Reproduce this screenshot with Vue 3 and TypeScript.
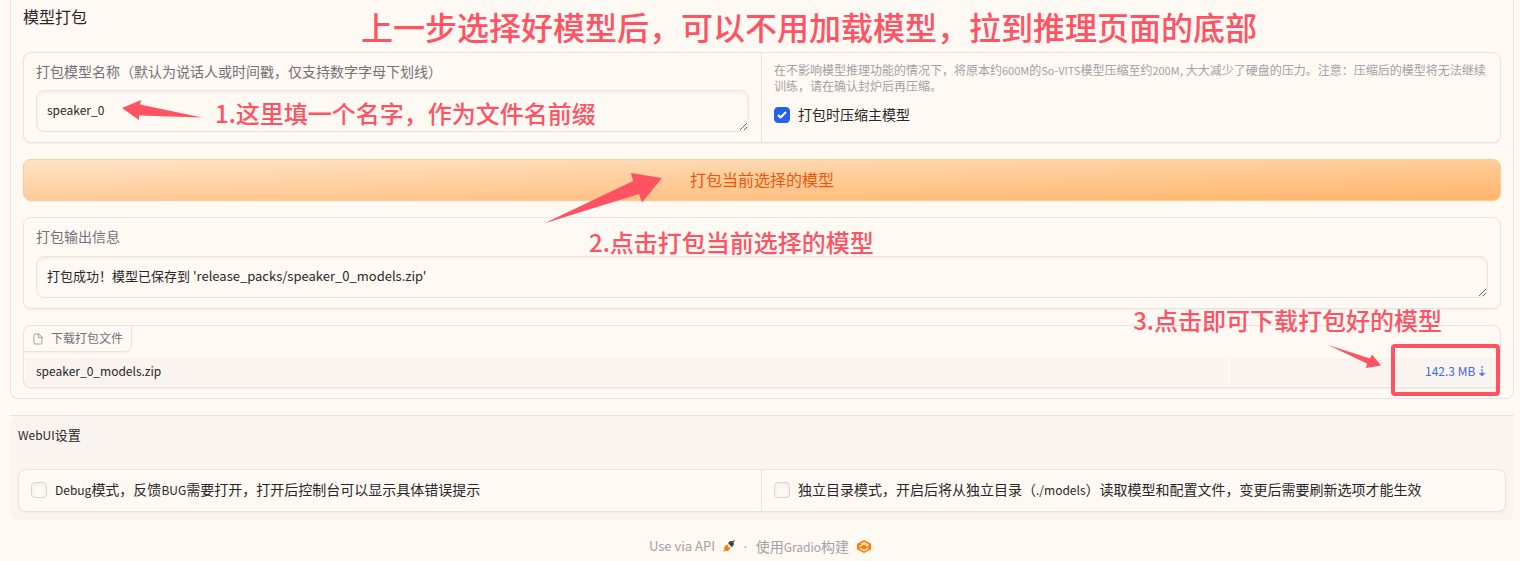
<script setup lang="ts">
import { ref } from 'vue'

const speaker = ref('speaker_0')
const output = ref("打包成功！模型已保存到 'release_packs/speaker_0_models.zip'")
const compress = ref(true)
const debug = ref(false)
const standalone = ref(false)
const files = [{ name: 'speaker_0_models.zip', size: '142.3 MB' }]
</script>

<template>
  <div class="page">
    <main class="panel">
      <h2 class="heading">模型打包</h2>

      <section class="card split">
        <div class="cell">
          <label class="label" for="speaker">打包模型名称（默认为说话人或时间戳，仅支持数字字母下划线）</label>
          <textarea id="speaker" v-model="speaker" class="field" rows="1"></textarea>
        </div>
        <div class="cell">
          <p class="info">在不影响模型推理功能的情况下，将原本约<span class="latin">600M</span>的<span class="latin">So-VITS</span>模型压缩至约<span class="latin">200M</span>, 大大减少了硬盘的压力。注意：压缩后的模型将无法继续训练，请在确认封炉后再压缩。</p>
          <label class="check"><input v-model="compress" type="checkbox" /><span class="check-text">打包时压缩主模型</span></label>
        </div>
      </section>

      <button class="primary" type="button">打包当前选择的模型</button>

      <section class="card cell output">
        <label class="label" for="output">打包输出信息</label>
        <textarea id="output" v-model="output" class="field" rows="1" readonly></textarea>
      </section>

      <section class="card files">
        <div class="file-label">
          <svg viewBox="0 0 24 24" width="12" height="12" fill="none" stroke="currentColor" stroke-width="2" stroke-linecap="round" stroke-linejoin="round" aria-hidden="true">
            <path d="M13 2H6a2 2 0 0 0-2 2v16a2 2 0 0 0 2 2h12a2 2 0 0 0 2-2V9z" />
            <path d="M13 2v7h7" />
          </svg>
          <span>下载打包文件</span>
        </div>
        <table class="file-table">
          <tbody>
            <tr v-for="file in files" :key="file.name">
              <td>{{ file.name }}</td>
              <td class="download"><a href="#">{{ file.size }}<span class="down">⇣</span></a></td>
            </tr>
          </tbody>
        </table>
      </section>
    </main>

    <section class="settings">
      <div class="settings-body">
        <h3 class="settings-title"><span class="latin">WebUI</span>设置</h3>
        <div class="card split">
          <div class="cell">
            <label class="check"><input v-model="debug" type="checkbox" /><span class="check-text"><span class="latin">Debug</span>模式，反馈<span class="latin">BUG</span>需要打开，打开后控制台可以显示具体错误提示</span></label>
          </div>
          <div class="cell">
            <label class="check"><input v-model="standalone" type="checkbox" /><span class="check-text">独立目录模式，开启后将从独立目录（<span class="latin">./models</span>）读取模型和配置文件，变更后需要刷新选项才能生效</span></label>
          </div>
        </div>
      </div>
    </section>

    <footer class="footer">
      <a class="api" href="#">Use via API
        <svg viewBox="0 0 28 28" width="12" height="12" aria-hidden="true">
          <path fill="#3c4555" d="M26.900 2.900a1.300 1.300 0 0 0-1.900-1.900l-2.400 2.500c-1.500-.9-3-1.100-4.400-.9-1.700.3-3.100 1.100-3.800 1.800l-2 2a1.300 1.300 0 0 0 0 1.900l7.300 7.300a1.300 1.300 0 0 0 1.900 0l2-2c.7-.7 1.500-2.100 1.800-3.800.2-1.400 0-2.900-.9-4.400z" />
          <path fill="#ff7c00" d="M12.300 12.900a1.300 1.300 0 0 0-1.900-1.900l-1.700 1.800-.3-.4a1.300 1.300 0 0 0-1.900 0l-2 2c-.7.700-1.500 2.100-1.800 3.800-.2 1.400 0 2.900.9 4.400L1.100 25.100A1.300 1.300 0 0 0 3 27l2.500-2.500c1.500.9 3 1.100 4.400.9 1.700-.3 3.100-1.100 3.800-1.800l2-2a1.300 1.300 0 0 0 0-1.900l-.4-.4 1.800-1.700a1.300 1.300 0 0 0-1.900-1.900l-1.800 1.700-2.700-2.700z" />
        </svg>
      </a>
      <span class="dot">·</span>
      <a href="#"><span>使用<span class="latin">Gradio</span>构建</span>
        <svg viewBox="0 0 28 26" width="14" height="13" aria-hidden="true">
          <path fill="#ff7c00" fill-rule="evenodd" d="M14 0 28 7.500v11L14 26 0 18.500v-11zM14 4 6.500 8 9 9.500l5-2.500 8 4 1.500-1L22 8zM4 12v2.500l10-5 8 4.500 2-1-10-5.500zM4.500 17.500l9.500 5 9.500-5-2.500-1.500-7 3.500-7-3.500z" />
        </svg>
      </a>
    </footer>

    <p class="note note-title">上一步选择好模型后，可以不用加载模型，拉到推理页面的底部</p>
    <p class="note note-name">1.这里填一个名字，作为文件名前缀</p>
    <p class="note note-pack">2.点击打包当前选择的模型</p>
    <p class="note note-download">3.点击即可下载打包好的模型</p>
    <svg class="arrow arrow-name" width="80" height="20" viewBox="0 0 80 20" aria-hidden="true"><path d="M0 8 19 0 18 4.500 80 17.500 17 15.500 17 20Z" /></svg>
    <svg class="arrow arrow-pack" width="118" height="51" viewBox="0 0 118 51" aria-hidden="true"><path d="M0 50.500 89 8 87 0 118 5 98 29.500 95 21Z" /></svg>
    <svg class="arrow arrow-download" width="53" height="24" viewBox="0 0 53 24" aria-hidden="true"><path d="M0 0 42 13.500 44 9.500 53 20.500 38 23 39 18.500Z" /></svg>
    <div class="frame"></div>
  </div>
</template>

<style>
body {
  background: #fff9f3;
}
</style>

<style scoped>
.page {
  position: relative;
  padding: 0 6px 0 10px;
  overflow: hidden;
  background: #fff9f3;
  color: #27272a;
  font-family: "Noto Sans CJK SC", sans-serif;
  font-size: 14px;
  line-height: 20px;
}
* {
  box-sizing: border-box;
}
.latin {
  display: inline-block;
  font-size: 12px;
  line-height: 12px;
}
.panel {
  display: flex;
  flex-direction: column;
  gap: 16px;
  padding: 0 12px 10px;
  border: 1px solid #e4e4e7;
  border-top: 0;
  border-radius: 0 0 8px 8px;
}
.heading {
  margin: 0;
  padding: 4px 0 8px;
  font-size: 16px;
  font-weight: 400;
  line-height: 24px;
}
.card {
  border: 1px solid #e4e4e7;
  border-radius: 8px;
  background: #fff9f3;
  box-shadow: 0 1px 2px rgba(0, 0, 0, 0.05);
}
.split {
  display: grid;
  grid-template-columns: 1fr 1fr;
}
.cell {
  padding: 8px 12px 10px;
}
.split > .cell:first-child {
  border-right: 1px solid #e4e4e7;
}
.label {
  display: block;
  margin-bottom: 9px;
  color: #71717a;
}
.output .label {
  margin-bottom: 10px;
}
.field {
  display: block;
  width: 100%;
  height: 42px;
  padding: 9px 10px 11px;
  border: 1px solid #e4e4e7;
  border-radius: 8px;
  outline: 0;
  background: #fff9f3;
  box-shadow: inset 0 2px 4px rgba(0, 0, 0, 0.05);
  color: inherit;
  font: inherit;
  font-size: 12px;
  line-height: 20px;
  overflow: hidden;
  resize: vertical;
}
#output {
  font-size: 13px;
}
.info {
  margin: 1px 0 10px;
  color: #a1a1aa;
  font-size: 12px;
  line-height: 16px;
}
.info .latin {
  font-size: 11px;
}
.check {
  display: flex;
  align-items: center;
  gap: 8px;
}
.check-text {
  padding-bottom: 2px;
}
.check input {
  flex: none;
  appearance: none;
  width: 16px;
  height: 16px;
  margin: 0;
  border: 1px solid #d4d4d8;
  border-radius: 4px;
  background: #fff9f3;
  box-shadow: inset 0 2px 4px rgba(0, 0, 0, 0.05);
}
.check input:checked {
  border-color: #2563eb;
  background: #2563eb url("data:image/svg+xml,%3Csvg viewBox='0 0 16 16' fill='white' xmlns='http://www.w3.org/2000/svg'%3E%3Cpath d='M12.2 4.800a1 1 0 0 1 0 1.400l-5 5a1 1 0 0 1-1.400 0l-2-2a1 1 0 0 1 1.400-1.400L6.500 9.100l4.300-4.300a1 1 0 0 1 1.400 0z'/%3E%3C/svg%3E") center / 16px;
}
.primary {
  height: 42px;
  padding: 0 0 2px;
  border: 1px solid #fdcb96;
  border-radius: 8px;
  background: linear-gradient(to bottom right, #ffe3c6, #ffb56b);
  box-shadow: 0 1px 2px rgba(0, 0, 0, 0.05);
  color: #ea580c;
  font: inherit;
  font-size: 16px;
  line-height: 24px;
}
.files {
  overflow: hidden;
}
.file-label {
  display: inline-flex;
  align-items: center;
  gap: 7px;
  height: 26px;
  padding: 0 8px;
  border: 1px solid #e4e4e7;
  border-width: 0 1px 1px 0;
  border-radius: 0 0 8px 0;
  box-shadow: 0 1px 2px rgba(0, 0, 0, 0.05);
  color: #71717a;
  font-size: 12px;
  vertical-align: top;
}
.file-label svg {
  color: #a1a1aa;
}
.file-label span {
  padding-bottom: 2px;
}
.file-table {
  width: 100%;
  margin-top: 4px;
  border-spacing: 2px;
  table-layout: fixed;
  font-size: 12px;
}
.file-table td {
  height: 27px;
  padding: 2px 10px 4px;
  background: #f9f4f0;
  line-height: 20px;
}
.file-table .download {
  width: 268px;
  text-align: right;
}
.download a {
  color: #4169e1;
  text-decoration: none;
}
.down {
  margin-left: 1px;
  font-family: "DejaVu Sans", sans-serif;
  font-size: 14px;
  line-height: 1;
}
.settings {
  margin-top: 16px;
  border-top: 1px solid #e4e4e7;
}
.settings-body {
  padding: 9px 8px 8px;
  border-radius: 8px;
  background: #f9f4f0;
}
.settings-title {
  margin: 0 0 24px;
  font-size: 13px;
  font-weight: 400;
  line-height: 20px;
}
.settings .cell {
  padding: 9px 12px 10px;
}
.footer {
  display: flex;
  justify-content: center;
  align-items: center;
  gap: 8px;
  padding: 16px 4px 5px 0;
  color: #a1a1aa;
}
.footer a {
  display: inline-flex;
  align-items: center;
  gap: 8px;
  color: inherit;
  text-decoration: none;
}
.footer .api {
  font-size: 13px;
}
.dot {
  font-family: "Liberation Sans", sans-serif;
}
.note {
  position: absolute;
  margin: 0;
  color: #ff5263;
  font-size: 24px;
  font-weight: 500;
  line-height: 32px;
  white-space: nowrap;
  pointer-events: none;
}
.note-title {
  top: 4px;
  left: 361px;
  font-size: 32px;
  line-height: 44px;
}
.note-name {
  top: 97px;
  left: 215px;
}
.note-pack {
  top: 226px;
  left: 589px;
}
.note-download {
  top: 304px;
  right: 78px;
}
.arrow {
  position: absolute;
  fill: #ff5263;
  pointer-events: none;
}
.arrow-name {
  top: 100px;
  left: 122px;
}
.arrow-pack {
  top: 173px;
  left: 544px;
}
.arrow-download {
  top: 345px;
  right: 139px;
}
.frame {
  position: absolute;
  top: 344px;
  right: 20px;
  width: 109px;
  height: 52px;
  border: 4px solid #ff5263;
  border-radius: 4px;
  pointer-events: none;
}
</style>
